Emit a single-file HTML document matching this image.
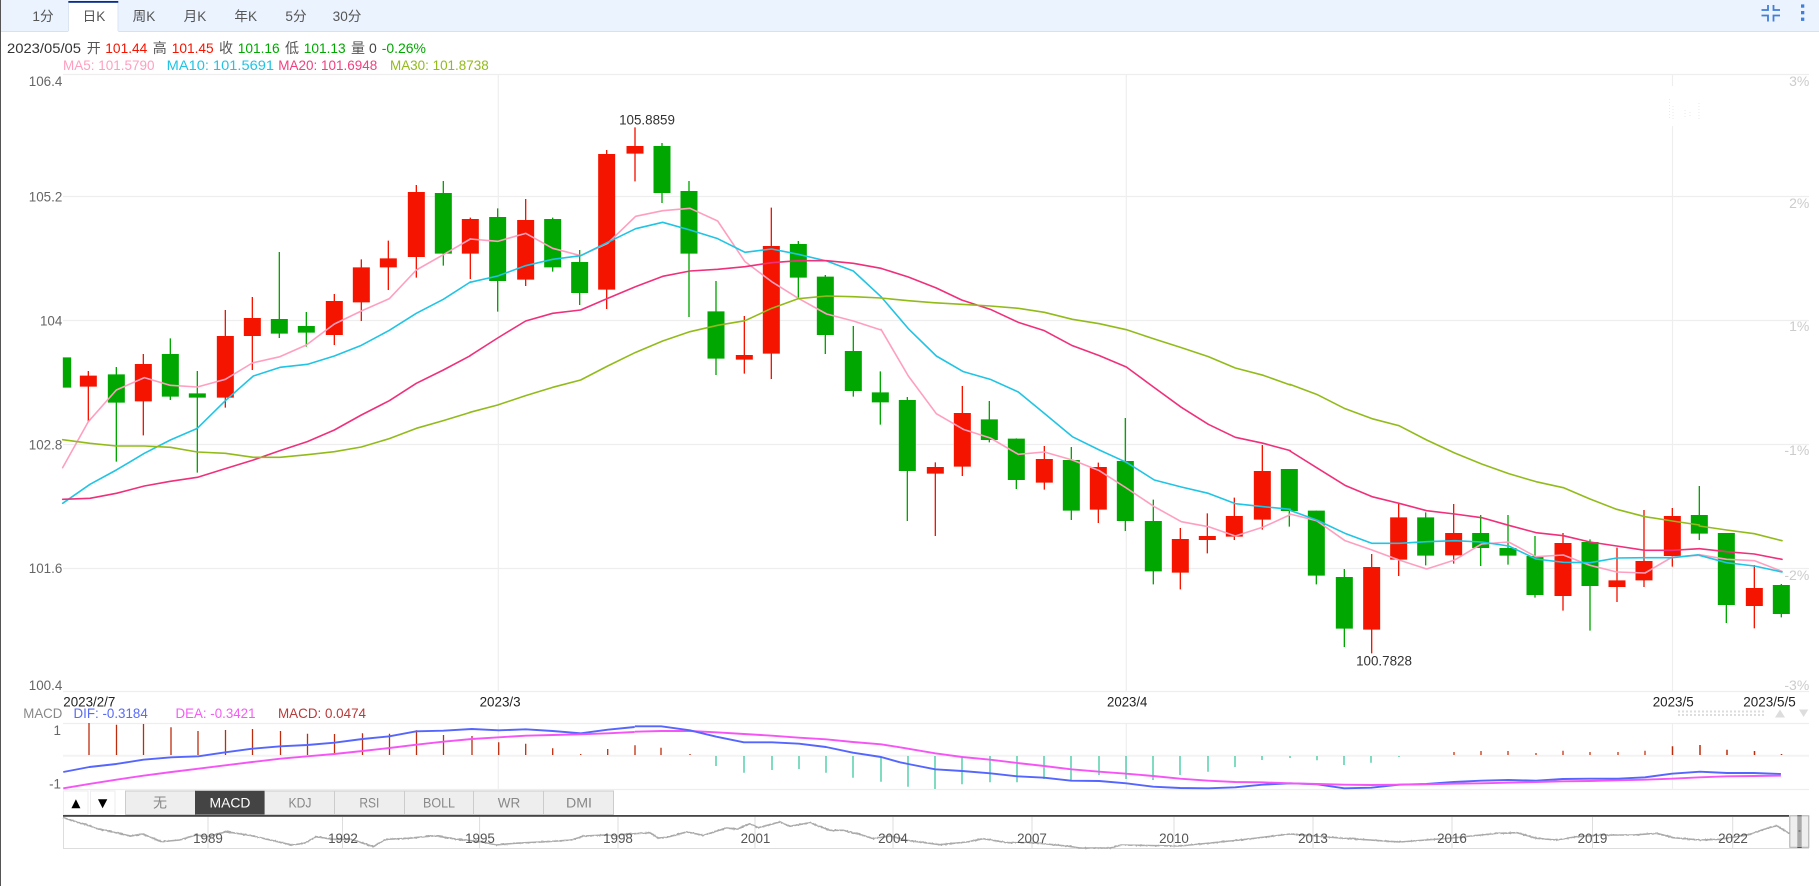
<!DOCTYPE html>
<html lang="zh">
<head>
<meta charset="utf-8">
<title>K线图</title>
<style>
html,body{margin:0;padding:0;background:#fff;width:1819px;height:886px;overflow:hidden}
svg{display:block}
text{font-family:"Liberation Sans","Noto Sans CJK SC",sans-serif;font-size:14px}
.rw{stroke:#f41400;stroke-width:4;fill:none}
.rb{stroke:#f41400;stroke-width:51;fill:none}
.gw{stroke:#00a700;stroke-width:4;fill:none}
.gb{stroke:#00a700;stroke-width:51;fill:none}
.m5,.m10,.m20,.m30{fill:none;stroke-width:4.8;stroke-linejoin:round;stroke-linecap:round}
.m5{stroke:#ff9fc0}.m10{stroke:#20c4e4}.m20{stroke:#f0307a}.m30{stroke:#92bb1a}
.dif,.dea{fill:none;vector-effect:non-scaling-stroke;stroke-width:1.9;stroke-linejoin:round}
.dif{stroke:#5566ff}.dea{stroke:#f655f6}
.ov{fill:none;stroke:#aaa;stroke-width:1.6;vector-effect:non-scaling-stroke}
.grid{stroke:#eee;stroke-width:1.2;fill:none}
.ax{fill:#666;font-size:13.4px;text-anchor:end}
.rx{fill:#ccc;font-size:14px;text-anchor:end}
.dt{fill:#222;font-size:13.4px}
.ol{fill:#555;font-size:13.4px;text-anchor:middle}
.tab{fill:#555;font-size:13.6px;text-anchor:middle}
.bt{fill:#888;font-size:14px;text-anchor:middle}
</style>
</head>
<body>
<svg xmlns="http://www.w3.org/2000/svg" width="1819" height="886" viewBox="0 0 1819 886">
<defs>
<filter id="jit" filterUnits="userSpaceOnUse" x="55" y="810" width="1750" height="45">
<feTurbulence type="fractalNoise" baseFrequency="0.4" numOctaves="2" seed="4"/>
<feDisplacementMap in="SourceGraphic" scale="1.8" xChannelSelector="R" yChannelSelector="G"/>
</filter>
</defs>
<rect width="1819" height="886" fill="#fff"/>

<!-- header -->
<rect x="0" y="0" width="1819" height="31" fill="#ebf3fe"/>
<rect x="0" y="31" width="1819" height="1" fill="#d6e1f2"/>
<rect x="68.3" y="1" width="50" height="31" fill="#fff"/>
<path d="M68.5 3V31M118 3V31" stroke="#dbe4f2" stroke-width="1" fill="none"/>
<rect x="68.3" y="1" width="50" height="1.8" fill="#0a2d8c"/>
<text class="tab" x="43" y="21">1分</text>
<text class="tab" x="94" y="21">日K</text>
<text class="tab" x="144" y="21">周K</text>
<text class="tab" x="195" y="21">月K</text>
<text class="tab" x="245.7" y="21">年K</text>
<text class="tab" x="296" y="21">5分</text>
<text class="tab" x="347" y="21">30分</text>
<path d="M1761.5 10H1768V5M1773.5 5V10H1780M1761.5 15.5H1768V21.5M1773.5 21.5V15.5H1780" fill="none" stroke="#3f7fd9" stroke-width="1.8"/>
<rect x="1801" y="4.4" width="3.3" height="3.3" fill="#3f7fd9"/>
<rect x="1801" y="11" width="3.3" height="3.3" fill="#3f7fd9"/>
<rect x="1801" y="17.6" width="3.3" height="3.3" fill="#3f7fd9"/>

<!-- info line -->
<text x="7" y="53" fill="#333" textLength="74" lengthAdjust="spacingAndGlyphs">2023/05/05</text>
<text x="86.7" y="53" fill="#555">开</text>
<text x="105.3" y="53" fill="#f41400" textLength="42" lengthAdjust="spacingAndGlyphs">101.44</text>
<text x="152.7" y="53" fill="#555">高</text>
<text x="171.7" y="53" fill="#f41400" textLength="42" lengthAdjust="spacingAndGlyphs">101.45</text>
<text x="219" y="53" fill="#555">收</text>
<text x="237.7" y="53" fill="#00a700" textLength="42" lengthAdjust="spacingAndGlyphs">101.16</text>
<text x="285" y="53" fill="#555">低</text>
<text x="303.7" y="53" fill="#00a700" textLength="42" lengthAdjust="spacingAndGlyphs">101.13</text>
<text x="351" y="53" fill="#555">量</text>
<text x="369" y="53" fill="#444">0</text>
<text x="381.7" y="53" fill="#00a700" textLength="44.3" lengthAdjust="spacingAndGlyphs">-0.26%</text>

<!-- MA legend -->
<text x="63" y="70" fill="#ff9fc0" textLength="91.5" lengthAdjust="spacingAndGlyphs">MA5: 101.5790</text>
<text x="166.7" y="70" fill="#20c4e4" textLength="107.3" lengthAdjust="spacingAndGlyphs">MA10: 101.5691</text>
<text x="278.3" y="70" fill="#f0407f" textLength="99" lengthAdjust="spacingAndGlyphs">MA20: 101.6948</text>
<text x="390" y="70" fill="#92bb1a" textLength="98.7" lengthAdjust="spacingAndGlyphs">MA30: 101.8738</text>

<!-- grid -->
<path class="grid" d="M63 74.5H1809M63 196.5H1809M63 320.5H1809M63 444.5H1809M63 568.5H1809M63 691.5H1809M63 723.5H1809M63 789.5H1809"/>
<path d="M63 755.7H1809" stroke="#f3f3f3" stroke-width="2" fill="none"/>
<path class="grid" d="M498.3 74V691M1126.3 74V691M1672.5 74V86M1672.5 126V691M498.3 723V789M1126.3 723V789M1672.5 723V789"/>
<path d="M1669.5 99V120M1673 106V120M1685 110V118M1690 112V116M1699 103V120" stroke="#e2e2e2" stroke-width="0.7" stroke-dasharray="1 2" fill="none"/>

<!-- axes -->
<text class="ax" x="62.3" y="86">106.4</text>
<text class="ax" x="62.3" y="201.7">105.2</text>
<text class="ax" x="62.3" y="325.7">104</text>
<text class="ax" x="62.3" y="449.7">102.8</text>
<text class="ax" x="62.3" y="573">101.6</text>
<text class="ax" x="62.3" y="690">100.4</text>
<text class="rx" x="1809.3" y="86">3%</text>
<text class="rx" x="1809.3" y="208">2%</text>
<text class="rx" x="1809.3" y="331">1%</text>
<text class="rx" x="1809.3" y="455">-1%</text>
<text class="rx" x="1809.3" y="580">-2%</text>
<text class="rx" x="1809.3" y="690">-3%</text>

<!-- candles zone 1 -->
<g transform="translate(50 100) scale(.33333)">
<path d="M51 772V863" stroke="#00a700" stroke-width="25" fill="none"/>
<path class="rw" d="M115 813V965M280 762V1006M526 630V923M607 591V810M853 582V735M934 478V663M1015 422V570M1099 255V533M1261 353V537"/>
<path class="rb" d="M115 827V860M280 792V904M526 708V893M607 654V708M853 603V705M934 502V607M1015 475V502M1099 276V471M1261 357V461"/>
<path class="gw" d="M199 801V1085M361 715V900M442 813V1118M688 456V714M769 636V740M1180 243V497"/>
<path class="gb" d="M199 823V908M361 762V890M442 880V893M688 657V701M769 678V698M1180 279V461"/>
</g>
<!-- candles zone 2 -->
<g transform="translate(470 100) scale(.33333)">
<path class="rw" d="M167 297V558M410 150V627M495 82V244M823 648V821M904 323V837"/>
<path class="rb" d="M167 360V539M410 162V569M495 138V161M823 765V779M904 438V761"/>
<path class="gw" d="M83 325V635M248 353V515M329 450V615M576 129V309M657 243V651M738 543V825M985 423V596M1066 525V762M1150 678V890M1231 814V974"/>
<path class="gb" d="M83 351V543M248 357V502M329 486V579M576 138V279M657 273V461M738 634V776M985 432V533M1066 530V705M1150 753V873M1231 877V907"/>
</g>
<!-- candles zone 3 -->
<g transform="translate(880 300) scale(.33333)">
<path class="rw" d="M166 487V708M247 258V528M493 438V569M655 488V669M901 684V868M982 640V760M1063 593V720M1147 435V689"/>
<path class="rb" d="M166 501V521M247 339V500M493 477V548M655 501V629M901 717V818M982 708V720M1063 648V710M1147 513V659"/>
<path class="gw" d="M82 291V663M328 303V427M409 415V567M574 441V660M736 354V693M820 599V853M1228 507V680"/>
<path class="gb" d="M82 300V513M328 358V420M409 416V540M574 480V632M736 483V663M820 663V814M1228 507V633"/>
</g>
<!-- candles zone 4 -->
<g transform="translate(1290 340) scale(.33333)">
<path class="rw" d="M245 642V940M326 490V708M491 492V671M819 579V812M981 623V786M1062 510V741M1147 504V680"/>
<path class="rb" d="M245 681V869M326 532V659M491 579V646M819 609V768M981 721V741M1062 663V721M1147 528V648"/>
<path class="gw" d="M79 512V733M163 687V921M407 517V676M572 525V678M654 525V674M735 588V773M900 598V872M1228 438V600"/>
<path class="gb" d="M79 512V707M163 711V866M407 532V647M572 579V624M654 624V647M735 648V765M900 606V738M1228 525V581"/>
</g>
<!-- candles zone 5 -->
<g transform="translate(1690 470) scale(.33333)">
<path class="rw" d="M193 285V475"/>
<path class="rb" d="M193 354V408"/>
<path class="gw" d="M109 189V459M274 342V442"/>
<path class="gb" d="M109 189V405M274 345V432"/>
</g>

<!-- MA lines -->
<g transform="translate(50 100) scale(.33333)">
<polyline class="m5" points="38,1103 115,965 199,870 283,833 361,856 442,861 526,838 607,789 690,770 769,735 853,672 934,633 1018,596 1099,510 1180,464 1261,417"/>
<polyline class="m10" points="38,1210 120,1153 199,1110 283,1060 361,1020 442,985 526,902 610,828 690,802 772,793 853,768 934,736 1018,691 1099,640 1180,598 1261,546"/>
<polyline class="m20" points="38,1198 120,1195 199,1180 283,1158 361,1144 442,1132 526,1106 610,1080 690,1052 772,1025 853,990 934,945 1018,902 1099,850 1180,810 1261,767"/>
<polyline class="m30" points="38,1019 120,1030 199,1038 283,1038 361,1042 442,1056 526,1060 610,1072 690,1072 772,1064 853,1055 934,1041 1018,1016 1099,985 1180,962 1261,937"/>
</g>
<g transform="translate(470 100) scale(.33333)">
<polyline class="m5" points="0,417 83,424 167,400 248,445 332,467 413,430 497,349 578,332 660,325 743,363 825,485 905,545 985,595 1070,642 1150,663 1233,690"/>
<polyline class="m10" points="0,547 83,528 167,497 248,478 332,467 413,427 497,386 578,367 660,390 743,416 825,457 905,447 985,463 1070,483 1150,513 1233,590"/>
<polyline class="m20" points="0,767 83,714 167,663 248,640 332,630 413,595 497,560 578,529 660,513 743,508 825,500 905,488 985,482 1070,482 1150,490 1233,505"/>
<polyline class="m30" points="0,937 83,915 167,887 248,862 332,840 413,798 497,757 578,723 660,695 743,676 825,662 905,625 985,596 1070,588 1150,590 1233,594"/>
</g>
<g transform="translate(880 300) scale(.33333)">
<polyline class="m5" points="3,88 85,228 169,341 250,388 331,414 415,463 493,456 577,480 658,512 739,564 823,620 904,665 985,680 1066,708 1150,681 1231,644"/>
<polyline class="m10" points="3,-10 85,86 169,168 250,215 331,238 415,276 493,340 577,410 658,450 739,487 823,540 904,561 985,580 1066,611 1150,620 1231,628"/>
<polyline class="m20" points="3,-95 85,-69 169,-36 245,0 331,28 415,67 493,92 577,137 658,167 739,201 823,263 904,322 985,373 1066,412 1150,430 1231,452"/>
<polyline class="m30" points="3,-6 85,2 160,8 245,13 331,18 415,25 493,37 577,58 658,71 739,89 823,117 904,143 985,170 1066,204 1150,226 1231,255"/>
</g>
<g transform="translate(1290 340) scale(.33333)">
<polyline class="m5" points="0,522 80,542 165,602 246,630 327,660 410,687 494,660 575,612 656,606 738,650 820,645 900,676 980,696 1065,699 1147,651 1228,646"/>
<polyline class="m10" points="0,511 80,540 165,580 246,610 327,610 410,605 494,602 575,606 656,618 738,657 820,667 900,668 980,654 1065,653 1147,653 1228,644"/>
<polyline class="m20" points="0,333 80,383 165,436 246,470 327,490 410,512 494,522 575,533 656,556 738,578 820,587 900,606 980,618 1065,631 1147,631 1228,626"/>
<polyline class="m30" points="0,133 80,163 165,206 246,236 327,257 410,300 494,339 575,372 656,401 738,425 820,443 900,477 980,508 1065,530 1147,543 1228,555"/>
</g>
<g transform="translate(1690 470) scale(.33333)">
<polyline class="m5" points="28,254 110,268 193,272 276,304"/>
<polyline class="m10" points="28,256 110,278 193,288 276,306"/>
<polyline class="m20" points="28,236 110,245 193,252 276,268"/>
<polyline class="m30" points="28,168 110,180 193,191 276,212"/>
</g>

<text x="647" y="124.3" fill="#333" text-anchor="middle" style="font-size:13.4px">105.8859</text>
<text x="1384" y="665.7" fill="#333" text-anchor="middle" style="font-size:13.4px">100.7828</text>

<!-- dates -->
<text class="dt" x="63.3" y="706.7" textLength="52" lengthAdjust="spacingAndGlyphs">2023/2/7</text>
<text class="dt" x="479.6" y="706.7" textLength="41" lengthAdjust="spacingAndGlyphs">2023/3</text>
<text class="dt" x="1107" y="706.7" textLength="40.4" lengthAdjust="spacingAndGlyphs">2023/4</text>
<text class="dt" x="1652.7" y="706.7" textLength="41" lengthAdjust="spacingAndGlyphs">2023/5</text>
<text class="dt" x="1743.3" y="706.7" textLength="52.4" lengthAdjust="spacingAndGlyphs">2023/5/5</text>

<!-- MACD legend -->
<text x="23.3" y="718" fill="#888" textLength="39" lengthAdjust="spacingAndGlyphs">MACD</text>
<text x="73.5" y="718" fill="#5a6cf5" textLength="74.3" lengthAdjust="spacingAndGlyphs">DIF: -0.3184</text>
<text x="175.5" y="718" fill="#f55cf5" textLength="80" lengthAdjust="spacingAndGlyphs">DEA: -0.3421</text>
<text x="278" y="718" fill="#b93a3a" textLength="88" lengthAdjust="spacingAndGlyphs">MACD: 0.0474</text>
<path d="M1678 711.5H1765M1678 715H1765" stroke="#ddd" stroke-width="2" stroke-dasharray="2 2" fill="none"/>
<polygon points="1780,709.5 1785,717.5 1775,717.5" fill="#ddd"/>
<polygon points="1799,709.5 1808.3,709.5 1803.6,717" fill="#ddd"/>

<text class="ax" x="61" y="735">1</text>
<text class="ax" x="61" y="788.3">-1</text>

<!-- MACD bars -->
<path stroke="#bd2c0c" stroke-width="1.3" fill="none" d="M89 755V723M116.5 755V724.7M143.5 755V724M171 755V727.3M198 755V731M225.5 755V730M252.5 755V729M280.5 755V731M307.5 755V733.7M334.5 755V734M362.5 755V733.3M389.5 755V733.7M416.5 755V730.3M443.5 755V735M472 755V736M498.7 755V742.3M525.7 755V743.7M552.7 755V748.3M580.7 755V754M607.7 755V749M635 755V745.3M661 755V747.7M690 755V754"/>
<path stroke="#d5593b" stroke-width="1.6" fill="none" d="M1454 755V752M1481 755V751M1508 755V751M1536 755V753M1563 755V750.7M1590 755V752M1618 755V752M1645 755V750.7"/>
<path stroke="#bd2c0c" stroke-width="1.5" fill="none" d="M1672.5 755V746.3M1700 755V745M1727 755V749.7M1754.5 755V751M1781.5 755V754"/>
<path stroke="#17c08c" stroke-width="1.1" fill="none" d="M716 756V766M744 756V772.7M772 756V770M799 756V769M826 756V772.7M853 756V777.7M881 756V781.7M908 756V786.7M935 756V789M962 756V784.3M990 756V782.3M1017 756V782.3M1044 756V779M1071 756V780M1099 756V775M1126 756V779M1153 756V780M1180 756V775M1208 756V771.7M1235 756V767M1262 756V760M1290 756V758M1317 756V760.3M1344 756V765M1371 756V762.7M1399 756V757"/>

<!-- DIF / DEA -->
<g transform="translate(0 680) scale(.40816 .33333)">
<polyline class="dif" points="155,276 219,261 285,252 351,239 420,232 486,229 552,217 618,206 687,199 753,195 819,188 888,177 954,169 1020,154 1086,152 1156,147 1222,151 1288,148 1354,153 1423,160 1489,149 1555,141"/>
<polyline class="dea" points="155,325 219,312 285,299 351,287 420,276 486,266 552,256 618,246 687,236 753,229 819,222 888,213 954,204 1020,194 1086,185 1156,177 1222,172 1288,167 1354,165 1423,163 1489,160 1555,156"/>
</g>
<g transform="translate(0 690) scale(.57398 .33333)">
<polyline class="dea" points="1106,125 1152,123 1202,123 1248,127 1296,132 1345,137 1392,143 1439,148 1486,156 1535,163 1568,172"/>
<polyline class="dif" points="1106,109 1152,109 1202,121 1248,140 1296,157 1345,157 1392,161 1439,171 1486,188 1535,201 1568,217"/>
</g>
<g transform="translate(900 690) scale(.58609 .33333)">
<polyline class="dif" points="0,217 14,222 60,238 106,243 154,250 200,259 246,263 292,272 340,273 386,280 432,290 478,294 526,295 572,292 618,284 666,280 712,283 758,295 804,293 852,284 898,282 945,276 991,272 1038,270 1085,272 1131,267 1177,266 1225,266 1271,262 1317,251 1365,245 1411,249 1457,249 1503,252"/>
<polyline class="dea" points="0,172 60,190 106,201 154,209 200,219 246,228 292,238 340,245 386,251 432,258 478,266 526,272 572,276 618,277 666,280 712,282 758,284 804,285 852,284 898,283 945,281 991,280 1038,278 1085,276 1131,274 1177,273 1225,271 1271,269 1317,266 1365,262 1411,259 1457,258 1503,257"/>
</g>

<!-- buttons -->
<rect x="63.5" y="791" width="24.5" height="23.5" fill="#fff" stroke="#eee"/>
<rect x="90.5" y="791" width="24.5" height="23.5" fill="#fff" stroke="#eee"/>
<polygon points="75.9,799.3 80.4,808.3 71.4,808.3" fill="#000"/>
<polygon points="98,799.3 107.3,799.3 102.6,808.3" fill="#000"/>
<g fill="#eee" stroke="#ccc" stroke-width="1">
<rect x="125.5" y="791" width="70" height="23.5"/>
<rect x="264.5" y="791" width="70" height="23.5"/>
<rect x="334.5" y="791" width="70" height="23.5"/>
<rect x="404.5" y="791" width="69" height="23.5"/>
<rect x="473.5" y="791" width="70" height="23.5"/>
<rect x="543.5" y="791" width="70" height="23.5"/>
</g>
<rect x="195" y="790.7" width="69.5" height="24" fill="#444"/>
<text class="bt" x="160" y="807.5">无</text>
<text class="bt" x="230" y="807.5" style="fill:#fff" textLength="41" lengthAdjust="spacingAndGlyphs">MACD</text>
<text class="bt" x="300" y="807.5" textLength="23" lengthAdjust="spacingAndGlyphs">KDJ</text>
<text class="bt" x="369.4" y="807.5" textLength="20" lengthAdjust="spacingAndGlyphs">RSI</text>
<text class="bt" x="439" y="807.5" textLength="32" lengthAdjust="spacingAndGlyphs">BOLL</text>
<text class="bt" x="509" y="807.5" textLength="22.5" lengthAdjust="spacingAndGlyphs">WR</text>
<text class="bt" x="579" y="807.5" textLength="26" lengthAdjust="spacingAndGlyphs">DMI</text>

<!-- overview -->
<path d="M63.5 817V848.5H1809M208 817V848M342.5 817V848M479.6 817V848M618 817V848M755 817V848M893 817V848M1032 817V848M1174 817V848M1313 817V848M1452 817V848M1592.5 817V848M1732.7 817V848" fill="none" stroke="#ddd" stroke-width="1"/>
<g filter="url(#jit)">
<g transform="translate(0 680) scale(.40816 .33333)">
<polyline class="ov" points="155,413 185,425 215,435 235,445 290,460 320,468 350,462 395,485 440,480 480,465 510,470 555,455 620,468 680,485 715,495 745,490 775,470 815,478 860,478 915,500 945,478 1000,475 1065,467 1120,478 1180,485 1215,495 1260,490 1340,485 1400,480 1430,468 1480,465 1515,468"/>
</g>
<g transform="translate(600 812) scale(.33333)">
<polyline class="ov" points="60,68 150,62 175,78 200,76 260,60 310,70 380,48 410,52 450,35 475,47 540,30 570,43 630,32 690,55 730,55 790,70 820,80 870,72 920,85 1020,98 1100,90 1150,80 1220,92 1300,92 1400,102 1440,108 1530,108 1560,100"/>
</g>
<polyline class="ov" points="1120,845 1180,846 1240,840 1290,834 1340,838 1400,842 1452,838 1500,833"/>
<g transform="translate(1500 680) scale(.33333)">
<polyline class="ov" points="0,460 50,458 110,475 170,480 230,470 300,465 400,465 470,460 520,473 600,480 660,478 750,463 800,445 830,437 868,460"/>
</g>
</g>
<rect x="63" y="815" width="1726" height="1.8" fill="#444"/>
<text class="ol" x="208" y="843">1989</text>
<text class="ol" x="343" y="843">1992</text>
<text class="ol" x="480" y="843">1995</text>
<text class="ol" x="618" y="843">1998</text>
<text class="ol" x="755.5" y="843">2001</text>
<text class="ol" x="893" y="843">2004</text>
<text class="ol" x="1032" y="843">2007</text>
<text class="ol" x="1174" y="843">2010</text>
<text class="ol" x="1313" y="843">2013</text>
<text class="ol" x="1452" y="843">2016</text>
<text class="ol" x="1592.5" y="843">2019</text>
<text class="ol" x="1733" y="843">2022</text>

<!-- slider -->
<rect x="1789.8" y="815.8" width="19" height="31.5" fill="#eee" stroke="#aaa"/>
<rect x="1797.3" y="815.5" width="4.4" height="32" fill="#aaa"/>
<path d="M1797.3 815.7H1801.7M1797.3 847.5H1801.7M1798.5 831H1800.5" stroke="#555" stroke-width="1" fill="none"/>

<!-- left edge -->
<rect x="0" y="0" width="1" height="886" fill="#555"/>
</svg>
</body>
</html>
